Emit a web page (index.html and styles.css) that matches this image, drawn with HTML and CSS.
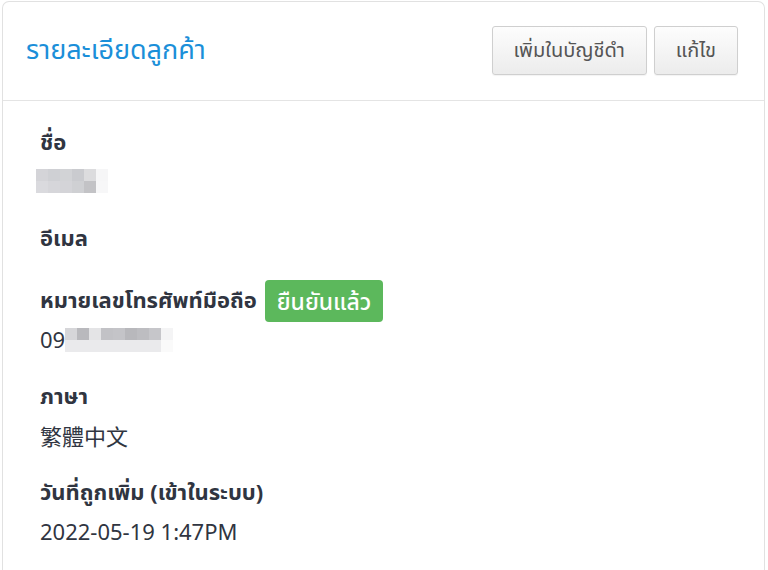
FILE: index.html
```html
<!DOCTYPE html>
<html lang="th">
<head>
<meta charset="utf-8">
<link rel="stylesheet" href="styles.css">
</head>
<body>
<div class="card">
  <div class="card-header">
    <h2 class="title">รายละเอียดลูกค้า</h2>
    <div class="actions">
      <button class="btn">เพิ่มในบัญชีดำ</button>
      <button class="btn">แก้ไข</button>
    </div>
  </div>
  <div class="card-body">
    <div class="field">
      <div class="label">ชื่อ</div>
      <div class="value"><span class="blur blur-name"><i></i><i></i><i></i><i></i><i></i><i></i><i></i><i></i><i></i><i></i><i></i><i></i></span></div>
    </div>
    <div class="field">
      <div class="label">อีเมล</div>
    </div>
    <div class="field">
      <div class="label">หมายเลขโทรศัพท์มือถือ <span class="badge">ยืนยันแล้ว</span></div>
      <div class="value">09<span class="blur blur-phone"><i></i><i></i><i></i><i></i><i></i><i></i><i></i><i></i><i></i><i></i><i></i><i></i><i></i><i></i><i></i><i></i><i></i><i></i></span></div>
    </div>
    <div class="field">
      <div class="label">ภาษา</div>
      <div class="value">繁體中文</div>
    </div>
    <div class="field">
      <div class="label">วันที่ถูกเพิ่ม (เข้าในระบบ)</div>
      <div class="value">2022-05-19 1:47PM</div>
    </div>
  </div>
</div>
</body>
</html>
```

FILE: styles.css
```css
html, body {
  margin: 0;
  padding: 0;
  background: #fff;
}
body {
  padding: 1px 3px 0 2px;
  font-family: "Noto Sans", "Noto Sans Thai", "Noto Sans CJK TC", sans-serif;
  color: #303541;
}
.card {
  border: 1px solid #e1e1e1;
  border-bottom: none;
  border-radius: 7px 7px 0 0;
  height: 600px;
}
.card-header {
  display: flex;
  align-items: center;
  justify-content: space-between;
  height: 98px;
  padding: 0 26px 0 23px;
  border-bottom: 1px solid #e4e4e4;
}
.title {
  margin: 0 0 2px;
  font-size: 27px;
  font-weight: normal;
  color: #1b8fd9;
  font-family: "DejaVu Sans", "Noto Sans Thai", sans-serif;
}
.actions {
  display: flex;
  gap: 7px;
  margin-bottom: 1px;
}
.btn {
  height: 49px;
  padding: 0 21px;
  font-family: "DejaVu Sans", "Noto Sans Thai", sans-serif;
  font-size: 20px;
  color: #555;
  background: linear-gradient(#fdfdfd, #ececec);
  border: 1px solid #cfcfcf;
  border-radius: 3px;
  box-shadow: 0 1px 1px rgba(0,0,0,0.05);
}
.card-body {
  padding: 21px 37px;
}
.field {
  margin-bottom: 20px;
}
.label {
  font-weight: bold;
  font-size: 22px;
  height: 42px;
  display: flex;
  align-items: center;
  gap: 8px;
}
.value {
  font-size: 22px;
  height: 34px;
  display: flex;
  align-items: center;
}
.badge {
  display: inline-block;
  background: #5cb85c;
  color: #fff;
  font-weight: 500;
  font-size: 23px;
  line-height: 42px;
  padding: 0 12px;
  border-radius: 4px;
}
.blur {
  display: inline-grid;
  grid-auto-flow: column;
  grid-template-rows: 12px 12px;
  grid-auto-columns: 12px;
}
.blur i {
  display: block;
}
.blur-name { margin-left: -4px; }
.blur-name i:nth-child(1) { background: #d4d4d8; }
.blur-name i:nth-child(2) { background: #dadade; }
.blur-name i:nth-child(3) { background: #cfd0d4; }
.blur-name i:nth-child(4) { background: #d6d6da; }
.blur-name i:nth-child(5) { background: #d2d3d6; }
.blur-name i:nth-child(6) { background: #d4d4d8; }
.blur-name i:nth-child(7) { background: #cacbcf; }
.blur-name i:nth-child(8) { background: #cfd0d3; }
.blur-name i:nth-child(9) { background: #dcdcde; }
.blur-name i:nth-child(10) { background: #c3c3c6; }
.blur-name i:nth-child(11) { background: #f6f6f7; }
.blur-name i:nth-child(12) { background: #f7f7f8; }
.blur-phone { margin-top: 2px; }
.blur-phone i:nth-child(odd) { background: #d6d6d9; }
.blur-phone i:nth-child(even) { background: #eaeaec; }
.blur-phone i:nth-child(3) { background: #b9b9bd; }
.blur-phone i:nth-child(5) { background: #e4e4e6; }
.blur-phone i:nth-child(7) { background: #c2c2c6; }
.blur-phone i:nth-child(9) { background: #c4c4c8; }
.blur-phone i:nth-child(11) { background: #b8b8bc; }
.blur-phone i:nth-child(13) { background: #bdbdc1; }
.blur-phone i:nth-child(15) { background: #c6c6ca; }
.blur-phone i:nth-child(17) { background: #f4f4f5; }
.blur-phone i:nth-child(18) { background: #fafafa; }
```
